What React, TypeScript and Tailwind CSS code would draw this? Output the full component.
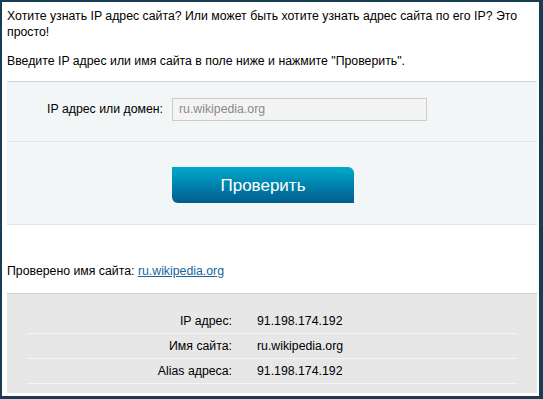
import React from 'react';

const rows = [
  { label: 'IP адрес:', value: '91.198.174.192' },
  { label: 'Имя сайта:', value: 'ru.wikipedia.org' },
  { label: 'Alias адреса:', value: '91.198.174.192' },
];

export default function App() {
  return (
    <div
      className="h-[399px] w-[543px] overflow-hidden bg-white border-[#173d55] border-l-2 border-t-2 border-r-[4px] border-b-[3px] pl-[5px] pr-[2px] text-[12.3px] leading-4 text-black"
      style={{ fontFamily: '"Liberation Sans", Arial, sans-serif' }}
    >
      {/* Intro */}
      <p className="pt-[6px]">
        Хотите узнать IP адрес сайта? Или может быть хотите узнать адрес сайта по его IP? Это просто!
      </p>
      <p className="mt-[13px]">Введите IP адрес или имя сайта в поле ниже и нажмите "Проверить".</p>

      {/* Form */}
      <div className="mt-[12px] bg-[#f2f6f7] border-t border-[#c9d7da]">
        <div className="h-[60px] pb-[5px] flex items-center border-b border-[#dfe7ea]">
          <label className="w-[156px] text-right">IP адрес или домен:</label>
          <div className="ml-[9px] w-[255px] h-[23px] bg-[#f4f4f4] border border-[#cccccc] flex items-center pl-[6px] text-[#8a8a8a]">
            ru.wikipedia.org
          </div>
        </div>
        <div className="h-[83px] flex items-start border-b border-[#dfe7ea] pt-[25px]">
          <button className="ml-[165px] w-[182px] h-[36px] rounded-tr-[6px] rounded-bl-[6px] bg-gradient-to-b from-[#00aacb] to-[#005d8e] text-white text-[17px] leading-none">
            Проверить
          </button>
        </div>
      </div>

      {/* Result */}
      <p className="mt-[38px]">
        Проверено имя сайта:{' '}
        <a href="#" className="text-[#1565a0] underline">
          ru.wikipedia.org
        </a>
      </p>

      <div className="mt-[14px] bg-[#e7e7e7] border-t border-[#cccccc] pt-[15px] pb-[9px] px-[20px]">
        {rows.map((r) => (
          <div key={r.label} className="h-[25px] flex items-center border-b border-[#f4f4f4]">
            <div className="w-[205px] text-right">{r.label}</div>
            <div className="pl-[25px]">{r.value}</div>
          </div>
        ))}
      </div>
    </div>
  );
}
